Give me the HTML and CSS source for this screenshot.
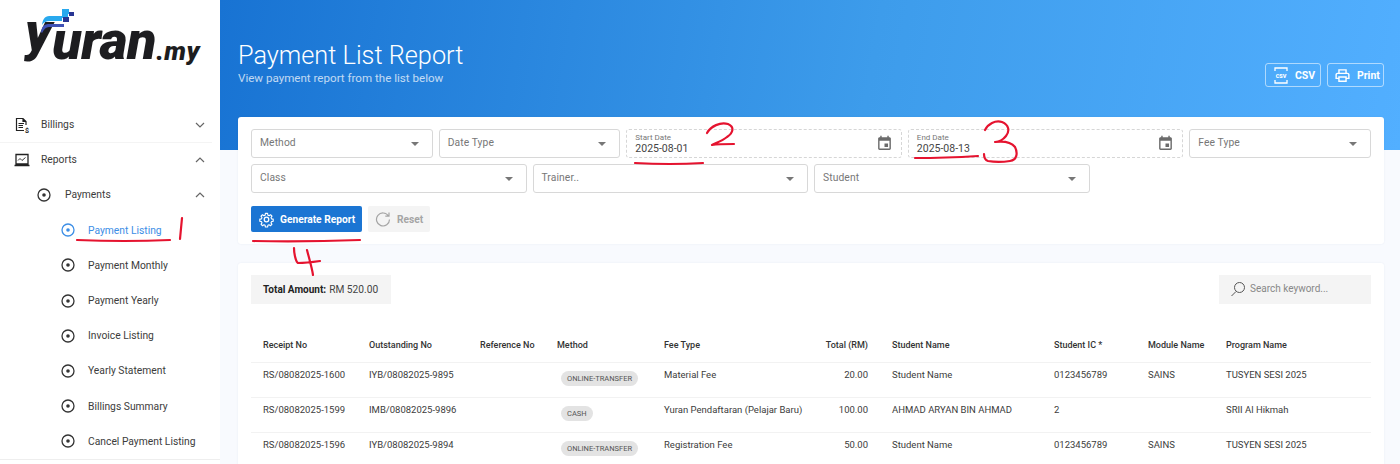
FILE: index.html
```html
<!DOCTYPE html>
<html lang="en">
<head>
<meta charset="utf-8">
<title>Payment List Report</title>
<link rel="stylesheet" href="styles.css">
</head>
<body>
<div class="app">
  <aside class="sidebar">
    <div class="logo">
      <span class="logo-y">y</span><span class="logo-name">uran</span><span class="logo-tld">.my</span>
      <svg class="logo-mark" viewBox="0 0 36 24" width="36" height="24">
        <path d="M1 23 C2 16 5 15 10 15 H24 V18 H9 C6 18 4 20 2 24 Z" fill="#3f51b5"/>
        <path d="M2 16 C3 8 6 7 11 7 H22 V5 H28 V9 H22 V12 H10 C6 12 4 13 2 16 Z" fill="#29a9ee"/>
        <rect x="22" y="0" width="7" height="5" fill="#29a9ee"/>
        <rect x="29" y="3" width="5" height="4" fill="#283593"/>
        <rect x="23" y="8" width="6" height="5" fill="#283593"/>
      </svg>
    </div>
    <nav class="nav">
      <div class="nav-row divided">
        <svg class="ico-main" viewBox="0 0 16 16" width="16" height="16" fill="none" stroke="#222" stroke-width="1.2"><path d="M10 13.5H2.5V1.500H9L12 4.500V8M9 1.500V4.500H12M4.500 6.500H10M4.500 8.500H9M4.500 10.500H9"/><text x="11" y="15.500" class="dollar">$</text></svg>
        <span class="nav-text">Billings</span>
        <svg class="chev" viewBox="0 0 10 6" width="10" height="6"><path d="M1 1l4 4 4-4"/></svg>
      </div>
      <div class="nav-row">
        <svg class="ico-main" viewBox="0 0 16 14" width="16" height="14" fill="none" stroke="#222" stroke-width="1.300"><path d="M2 1.500H14V11H2ZM0.500 12.500H15.500"/><path d="M4 7.500L6 5.500L8 7.500L11.500 4.500" stroke-width="0.900"/></svg>
        <span class="nav-text">Reports</span>
        <svg class="chev" viewBox="0 0 10 6" width="10" height="6"><path d="M1 5l4-4 4 4"/></svg>
      </div>
      <div class="nav-row lvl2">
        <svg class="dot" viewBox="0 0 14 14" width="14" height="14"><circle cx="7" cy="7" r="6"/><circle class="pip" cx="7" cy="7" r="1.800"/></svg>
        <span class="nav-text">Payments</span>
        <svg class="chev" viewBox="0 0 10 6" width="10" height="6"><path d="M1 5l4-4 4 4"/></svg>
      </div>
      <div class="nav-row lvl3 active">
        <svg class="dot" viewBox="0 0 14 14" width="14" height="14"><circle cx="7" cy="7" r="6"/><circle class="pip" cx="7" cy="7" r="1.800"/></svg>
        <span class="nav-text">Payment Listing</span>
      </div>
      <div class="nav-row lvl3">
        <svg class="dot" viewBox="0 0 14 14" width="14" height="14"><circle cx="7" cy="7" r="6"/><circle class="pip" cx="7" cy="7" r="1.800"/></svg>
        <span class="nav-text">Payment Monthly</span>
      </div>
      <div class="nav-row lvl3">
        <svg class="dot" viewBox="0 0 14 14" width="14" height="14"><circle cx="7" cy="7" r="6"/><circle class="pip" cx="7" cy="7" r="1.800"/></svg>
        <span class="nav-text">Payment Yearly</span>
      </div>
      <div class="nav-row lvl3">
        <svg class="dot" viewBox="0 0 14 14" width="14" height="14"><circle cx="7" cy="7" r="6"/><circle class="pip" cx="7" cy="7" r="1.800"/></svg>
        <span class="nav-text">Invoice Listing</span>
      </div>
      <div class="nav-row lvl3">
        <svg class="dot" viewBox="0 0 14 14" width="14" height="14"><circle cx="7" cy="7" r="6"/><circle class="pip" cx="7" cy="7" r="1.800"/></svg>
        <span class="nav-text">Yearly Statement</span>
      </div>
      <div class="nav-row lvl3">
        <svg class="dot" viewBox="0 0 14 14" width="14" height="14"><circle cx="7" cy="7" r="6"/><circle class="pip" cx="7" cy="7" r="1.800"/></svg>
        <span class="nav-text">Billings Summary</span>
      </div>
      <div class="nav-row lvl3 last">
        <svg class="dot" viewBox="0 0 14 14" width="14" height="14"><circle cx="7" cy="7" r="6"/><circle class="pip" cx="7" cy="7" r="1.800"/></svg>
        <span class="nav-text">Cancel Payment Listing</span>
      </div>
    </nav>
  </aside>

  <main class="main">
    <header class="hero">
      <div class="hero-text">
        <h1 class="title">Payment List Report</h1>
        <p class="subtitle">View payment report from the list below</p>
      </div>
      <div class="hero-actions">
        <button class="ghost-btn btn-csv">
          <svg viewBox="0 0 14 17" width="14" height="17" fill="none" stroke="#fff" stroke-width="1.300"><path d="M1 4V1H13V4M1 13V16H13V13"/><text x="7" y="11" class="csv-mark">CSV</text></svg>
          <span>CSV</span>
        </button>
        <button class="ghost-btn btn-print">
          <svg viewBox="0 0 24 24" width="17" height="17" fill="#fff"><path d="M19 8h-1V3H6v5H5c-1.660 0-3 1.340-3 3v6h4v4h12v-4h4v-6c0-1.660-1.340-3-3-3zM8 5h8v3H8V5zm8 12v2H8v-4h8v2zm2-2v-2H6v2H4v-4c0-.55.45-1 1-1h14c.55 0 1 .45 1 1v4h-2z"/></svg>
          <span>Print</span>
        </button>
      </div>
    </header>

    <section class="card filter-card">
      <div class="filters">
        <div class="field span2"><span class="ph">Method</span><i class="caret"></i></div>
        <div class="field span2"><span class="ph">Date Type</span><i class="caret"></i></div>
        <div class="field date span3">
          <div class="date-text"><span class="date-label">Start Date</span><span class="date-value">2025-08-01</span></div>
          <svg class="cal" viewBox="0 0 24 24" width="17" height="17"><path d="M17 12h-5v5h5v-5zM16 1v2H8V1H6v2H5c-1.110 0-1.990.9-1.990 2L3 19c0 1.100.89 2 2 2h14c1.100 0 2-.9 2-2V5c0-1.100-.9-2-2-2h-1V1h-2zm3 18H5V8h14v11z"/></svg>
        </div>
        <div class="field date span3">
          <div class="date-text"><span class="date-label">End Date</span><span class="date-value">2025-08-13</span></div>
          <svg class="cal" viewBox="0 0 24 24" width="17" height="17"><path d="M17 12h-5v5h5v-5zM16 1v2H8V1H6v2H5c-1.110 0-1.990.9-1.990 2L3 19c0 1.100.89 2 2 2h14c1.100 0 2-.9 2-2V5c0-1.100-.9-2-2-2h-1V1h-2zm3 18H5V8h14v11z"/></svg>
        </div>
        <div class="field span2"><span class="ph">Fee Type</span><i class="caret"></i></div>
        <div class="field span3"><span class="ph">Class</span><i class="caret"></i></div>
        <div class="field span3"><span class="ph">Trainer..</span><i class="caret"></i></div>
        <div class="field span3"><span class="ph">Student</span><i class="caret"></i></div>
      </div>
      <div class="actions">
        <button class="btn-primary">
          <svg viewBox="0 0 24 24" width="17" height="17" fill="none" stroke="#fff" stroke-width="1.800" stroke-linejoin="round"><circle cx="12" cy="12" r="3.200"/><path d="M10.300 2.500h3.400l.5 2.700 1.800.8 2.300-1.500 2.300 2.400-1.500 2.200.8 1.900 2.600.5v3.300l-2.600.5-.8 1.900 1.500 2.200-2.300 2.400-2.300-1.500-1.800.8-.5 2.700h-3.400l-.5-2.700-1.800-.8-2.300 1.500-2.300-2.400 1.500-2.200-.8-1.900-2.600-.5v-3.300l2.600-.5.8-1.900-1.500-2.200 2.300-2.400 2.300 1.500 1.800-.8z" transform="translate(1.200 1.200) scale(.9)"/></svg>
          <span>Generate Report</span>
        </button>
        <button class="btn-muted">
          <svg viewBox="0 0 16 16" width="16" height="16" fill="none" stroke="#a5a5a5" stroke-width="1.200"><path d="M13.500 5A6.500 6.500 0 1 0 14.500 8.500M14 1.500V5.200H10.300"/></svg>
          <span>Reset</span>
        </button>
      </div>
    </section>

    <section class="card table-card">
      <div class="table-tools">
        <div class="total"><b>Total Amount:</b> RM 520.00</div>
        <div class="search">
          <svg viewBox="0 0 16 16" width="16" height="16" fill="none" stroke="#555" stroke-width="1"><circle cx="9.500" cy="6.500" r="5"/><path d="M6 10.500L1.500 15"/></svg>
          <span>Search keyword...</span>
        </div>
      </div>
      <table class="report">
        <colgroup>
          <col class="c-receipt"><col class="c-out"><col class="c-ref"><col class="c-method"><col class="c-fee"><col class="c-total"><col class="c-name"><col class="c-ic"><col class="c-module"><col class="c-prog">
        </colgroup>
        <thead>
          <tr><th>Receipt No</th><th>Outstanding No</th><th>Reference No</th><th>Method</th><th>Fee Type</th><th class="num">Total (RM)</th><th>Student Name</th><th>Student IC *</th><th>Module Name</th><th>Program Name</th></tr>
        </thead>
        <tbody>
          <tr><td>RS/08082025-1600</td><td>IYB/08082025-9895</td><td></td><td><span class="pill">ONLINE-TRANSFER</span></td><td>Material Fee</td><td class="num">20.00</td><td>Student Name</td><td>0123456789</td><td>SAINS</td><td>TUSYEN SESI 2025</td></tr>
          <tr><td>RS/08082025-1599</td><td>IMB/08082025-9896</td><td></td><td><span class="pill">CASH</span></td><td>Yuran Pendaftaran (Pelajar Baru)</td><td class="num">100.00</td><td>AHMAD ARYAN BIN AHMAD</td><td>2</td><td></td><td>SRII Al Hikmah</td></tr>
          <tr><td>RS/08082025-1596</td><td>IYB/08082025-9894</td><td></td><td><span class="pill">ONLINE-TRANSFER</span></td><td>Registration Fee</td><td class="num">50.00</td><td>Student Name</td><td>0123456789</td><td>SAINS</td><td>TUSYEN SESI 2025</td></tr>
        </tbody>
      </table>
    </section>
  </main>
</div>

<svg class="ink" viewBox="0 0 1400 464" width="1400" height="464" fill="none">
  <path d="M77 240Q125 242 170 240M182 218L180 239"/>
  <path d="M707 133C711 126 720 122 728 124C735 127 733 133 727 137C722 141 716 143 712 145C718 144 726 144 734 144M635 163Q670 165 703 163"/>
  <path d="M985 130C988 124 995 120 1002 122C1009 125 1010 131 1006 136C1003 140 998 142 995 142C1003 141 1011 142 1015 147C1018 153 1017 160 1010 161C1003 162 994 162 988 161C985 160 984 158 984 154M915 158Q945 158 978 156"/>
  <path d="M294 248C294 254 296 262 298 263C305 263 313 262 320 261M307 250C309 258 312 268 313 275M253 241Q305 242 360 240"/>
</svg>
</body>
</html>
```

FILE: styles.css
```css
* { box-sizing: border-box; }
html, body { margin: 0; height: 464px; overflow: hidden; }
body { font-family: Roboto, "Liberation Sans", sans-serif; color: #333; background: #f8fafe; position: relative; }
.app { display: flex; height: 464px; overflow: hidden; }

/* sidebar */
.sidebar { width: 220px; flex: none; background: #fff; }
.logo { height: 107px; padding: 0 0 0 25px; display: flex; align-items: flex-start; position: relative; color: #1d1d20; font-family: Roboto, sans-serif; font-weight: 900; font-style: italic; }
.logo-mark { position: absolute; left: 40px; top: 9px; }
.logo-y { font-size: 54px; line-height: 64px; }
.logo-name { font-size: 54px; line-height: 54px; margin-top: 14px; letter-spacing: -.5px; }
.logo-tld { font-size: 26px; line-height: 30px; margin-top: 36px; letter-spacing: .5px; }
.nav { display: flex; flex-direction: column; }
.nav-row { height: 35.2px; display: flex; align-items: center; padding: 0 15px 0 14px; font-size: 10.3px; color: #3c3c3c; flex: none; }
.nav-row.divided { box-shadow: 0 1px 0 #f4f4f4; margin-right: 8px; padding-right: 7px; }
.nav-text { flex: 1; }
.ico-main { flex: none; margin-right: 11px; }
.dollar { font: 700 7px Roboto, sans-serif; fill: #222; stroke: none; }
.chev { flex: none; fill: none; stroke: #666; stroke-width: 1.2; }
.dot { flex: none; fill: none; stroke: #333; stroke-width: 1.3; }
.dot .pip { fill: #333; stroke: none; }
.lvl2 { padding-left: 37px; }
.lvl2 .dot { margin-right: 14px; }
.lvl3 { padding-left: 61px; }
.lvl3 .dot { margin-right: 13px; }
.active { color: #3c8ee6; }
.active .dot { stroke: #3c8ee6; }
.active .dot .pip { fill: #3c8ee6; }
.last { box-shadow: 0 1px 0 #eee; }

/* main */
.main { flex: 1; min-width: 0; }
.hero { height: 150px; background: linear-gradient(100deg, #1873d3 0%, #3d9ceb 55%, #52afff 100%); display: flex; justify-content: space-between; padding: 41px 16px 0 18px; color: #fff; }
.title { margin: 0; font-size: 25.3px; line-height: 29px; font-weight: 300; }
.subtitle { margin: 0; font-size: 11.6px; line-height: 16px; opacity: .72; }
.hero-actions { display: flex; gap: 6px; padding-top: 22px; }
.ghost-btn { height: 24px; background: transparent; border: 1px solid rgba(255,255,255,.55); border-radius: 3px; color: #fff; font: 700 10.5px Roboto, sans-serif; display: flex; align-items: center; padding: 0; flex: none; }
.btn-csv { width: 56px; gap: 7px; padding-left: 8px; }
.btn-print { width: 57px; gap: 6px; padding-left: 6px; }
.csv-mark { font: 900 5.500px Roboto, sans-serif; fill: #fff; stroke: none; text-anchor: middle; }

.card { background: #fff; margin-left: 18px; margin-right: 16px; border-radius: 3px; box-shadow: 0 0 2px rgba(40,70,120,.08); }
.filter-card { margin-top: -33px; height: 127px; padding: 12px 13px 0; }
.filters { display: grid; grid-template-columns: repeat(12, 1fr); gap: 6px; }
.field { height: 29px; border: 1px solid #d8d8d8; border-radius: 3px; display: flex; align-items: center; justify-content: space-between; padding: 0 13px 2px 8px; }
.span2 { grid-column: span 2; }
.span3 { grid-column: span 3; }
.ph { font-size: 10.3px; color: #777; letter-spacing: .1px; }
.caret { width: 0; height: 0; border-left: 4px solid transparent; border-right: 4px solid transparent; border-top: 4px solid #777; margin-top: 3px; }
.date { border: 1px dashed #d6d6d6; padding: 0 8px 0 8px; }
.date-text { display: flex; flex-direction: column; }
.date-label { font-size: 8px; line-height: 9px; color: #777; }
.date-value { font-size: 10.5px; line-height: 13px; color: #444; }
.cal { fill: #6b6b6b; flex: none; }

.actions { display: flex; gap: 6px; margin-top: 13px; }
.btn-primary, .btn-muted { height: 26px; border: 0; border-radius: 2px; display: flex; align-items: center; font: 700 10.2px Roboto, sans-serif; }
.btn-primary { width: 111px; background: #1b75d3; color: #fff; padding: 0 0 0 7px; gap: 5px; }
.btn-muted { width: 62px; background: #f4f4f4; color: #a5a5a5; padding: 0 0 0 7px; gap: 6px; }

.table-card { margin-top: 19px; height: 240px; padding: 12px 13px 0; }
.table-tools { display: flex; justify-content: space-between; height: 29px; }
.total, .search { height: 29px; background: #f4f4f4; display: flex; align-items: center; font-size: 10.2px; }
.total { width: 140px; padding-left: 12px; color: #444; gap: 3px; }
.total b { color: #222; font-weight: 700; font-size: 10px; }
.search { width: 152px; padding: 0 0 2px 11px; gap: 4px; color: #888; font-size: 10px; }
.report { width: 1120px; table-layout: fixed; border-collapse: collapse; margin-top: 26px; font-size: 9.5px; line-height: 12px; color: #3c3c3c; }
.c-receipt { width: 106px; }
.c-out { width: 111px; }
.c-ref { width: 77px; }
.c-method { width: 107px; }
.c-fee { width: 149px; }
.c-total { width: 79px; }
.c-name { width: 162px; }
.c-ic { width: 94px; }
.c-module { width: 78px; }
.c-prog { width: 157px; }
.report th { height: 32px; padding: 0 0 2px 12px; text-align: left; font-weight: 500; color: #333; font-size: 9px; border-bottom: 1px solid #f2f2f2; }
.report td { height: 35px; padding: 6px 0 0 12px; vertical-align: top; border-bottom: 1px solid #f2f2f2; white-space: nowrap; }
.report .num { text-align: right; padding-left: 0; padding-right: 12px; }
.pill { display: block; width: fit-content; height: 15px; line-height: 15px; padding: 0 6px; margin: 2px 0 0 4px; background: #e3e3e3; border-radius: 8px; font-size: 7.5px; color: #555; }

/* hand-drawn marks laid over the screenshot */
.ink { position: absolute; left: 0; top: 0; pointer-events: none; stroke: #e5132f; stroke-width: 2.2; stroke-linecap: round; stroke-linejoin: round; }
```
